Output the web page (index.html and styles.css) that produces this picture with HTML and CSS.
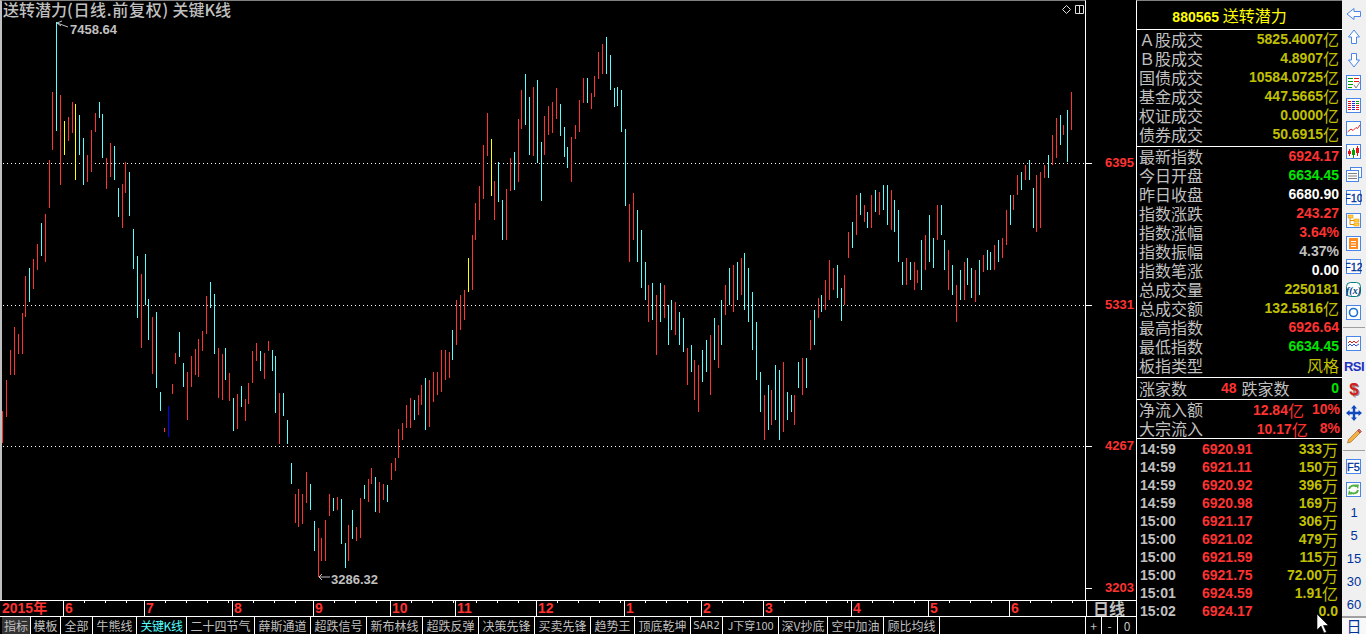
FILE: index.html
```html
<!DOCTYPE html>
<html lang="zh">
<head>
<meta charset="utf-8">
<title>送转潜力</title>
<link rel="stylesheet" href="styles.css">
</head>
<body>
<div class="app">
  <div class="main">
    <div class="chart-row">
      <div class="plot">
        <svg class="bars" viewBox="2 1 1083 599" width="1083" height="599">
          <path class="dots" d="M3 163.5H1085M3 305.5H1085M3 446.5H1085"/>
          <path class="red" d="M2.5 411V443M6.5 380V417M10.5 350V375M14.5 327V375M18.5 334V354M22.5 313V354M25.5 276V317M33.5 259V289M37.5 244V270M45.5 214V262M49.5 160V208M52.5 92V150M60.5 95V185M68.5 117V141M72.5 102V133M87.5 155V182M91.5 130V172M95.5 113V132M106.5 158V189M110.5 143V177M122.5 184V228M125.5 162V193M141.5 274V348M152.5 317V374M164.5 428V432M172.5 384V394M175.5 353V364M187.5 372V420M191.5 356V387M195.5 349V375M198.5 339V377M202.5 331V351M206.5 296V334M218.5 348V398M222.5 354V400M229.5 373V401M237.5 394V429M245.5 399V421M248.5 383V404M252.5 351V383M256.5 343V361M264.5 353V379M268.5 341V351M279.5 393V444M295.5 494V523M298.5 489V527M302.5 494V524M306.5 472V503M318.5 528V577M321.5 538V561M325.5 520V561M329.5 494V516M337.5 497V510M348.5 525V561M356.5 527V541M360.5 498V538M368.5 479V502M371.5 468V484M379.5 482V513M383.5 484V500M391.5 463V480M395.5 458V471M398.5 429V458M402.5 423V440M406.5 405V428M410.5 398V428M418.5 395V415M421.5 385V405M429.5 380V427M433.5 372V402M437.5 372V395M441.5 350V392M445.5 350V380M449.5 352V378M456.5 300V345M460.5 295V330M464.5 290V320M472.5 235V290M475.5 203V240M479.5 186V220M483.5 145V199M487.5 113V156M494.5 181V220M506.5 189V240M510.5 158V191M518.5 119V182M521.5 90V129M533.5 87V156M544.5 116V155M548.5 106V135M552.5 102V133M556.5 88V119M571.5 137V182M575.5 125V139M579.5 100V132M583.5 78V103M591.5 93V109M594.5 76V97M598.5 52V79M602.5 44V74M629.5 204V262M633.5 193V240M648.5 285V322M656.5 295V355M664.5 285V318M675.5 302V335M687.5 348V385M694.5 360V400M698.5 365V412M710.5 335V395M718.5 325V368M725.5 285V315M733.5 265V312M741.5 258V295M764.5 395V440M771.5 390V425M783.5 362V432M794.5 395V425M802.5 358V395M810.5 320V350M818.5 298V318M825.5 280V310M829.5 260V300M833.5 268V290M844.5 275V305M848.5 232V258M856.5 195V235M864.5 205V222M871.5 195V228M879.5 192V215M891.5 190V230M906.5 258V285M914.5 262V290M917.5 270V283M925.5 235V270M937.5 205V240M948.5 250V290M956.5 285V322M964.5 262V300M975.5 270V302M983.5 255V272M994.5 245V270M1002.5 238V258M1006.5 210V245M1013.5 195V210M1017.5 175V195M1025.5 165V180M1036.5 175V232M1040.5 172V228M1044.5 165V178M1052.5 135V165M1056.5 118V158M1063.5 125V135M1071.5 92V130"/>
          <path class="cyan" d="M29.5 268V302M41.5 223V256M56.5 22V131M79.5 115V155M83.5 138V185M99.5 102V118M102.5 114V158M114.5 146V180M118.5 188V217M129.5 172V216M133.5 229V269M137.5 256V318M145.5 254V305M148.5 299V340M156.5 312V388M160.5 392V411M179.5 332V357M183.5 363V387M210.5 282V308M214.5 294V354M225.5 348V380M233.5 398V431M241.5 386V407M260.5 351V371M272.5 350V371M275.5 356V413M283.5 393V416M287.5 420V444M291.5 463V484M310.5 484V510M314.5 521V551M333.5 498V511M341.5 499V544M345.5 543V568M352.5 510V539M364.5 485V499M375.5 477V512M387.5 485V502M414.5 400V420M425.5 378V430M452.5 330V360M498.5 162V202M502.5 200V240M514.5 152V190M525.5 74V125M529.5 97V155M537.5 80V163M541.5 142V201M560.5 104V136M564.5 127V157M567.5 147V168M587.5 78V103M606.5 37V74M610.5 55V90M614.5 88V107M617.5 87V106M621.5 90V132M625.5 129V206M637.5 210V262M641.5 230V288M645.5 262V300M652.5 283V320M660.5 283V322M668.5 305V345M671.5 300V330M679.5 312V345M683.5 318V352M691.5 345V372M702.5 350V382M706.5 340V372M714.5 318V360M721.5 300V345M729.5 268V305M737.5 262V300M744.5 253V310M748.5 268V322M752.5 292V350M756.5 322V380M760.5 372V412M768.5 385V430M775.5 365V420M779.5 370V440M787.5 392V420M791.5 395V412M798.5 362V388M806.5 358V388M814.5 310V345M821.5 295V312M837.5 265V298M841.5 288V321M852.5 222V248M860.5 193V215M867.5 212V228M875.5 190V212M883.5 185V210M887.5 185V225M894.5 200V232M898.5 210V262M902.5 262V285M910.5 262V280M921.5 240V290M929.5 215V262M933.5 238V268M941.5 205V235M944.5 240V270M952.5 265V295M960.5 270V300M967.5 258V285M971.5 268V298M979.5 260V295M987.5 250V270M990.5 252V270M998.5 240V262M1010.5 195V225M1021.5 172V190M1029.5 160V180M1033.5 188V228M1048.5 155V178M1060.5 115V145M1067.5 110V162"/>
          <path class="yellow" d="M64.5 121V155M75.5 104V180M468.5 258V292M491.5 139V196"/>
          <path class="blue" d="M168.5 406V437"/>
          <path class="leader" d="M57 23L62 21M57 23L68 27M57 23L61 26M319 577H330M319 577L322 574M319 577L322 580"/>
        </svg>
        <div class="title">送转潜力<span class="wide">(日线.前复权)</span> 关键K线</div>
        <svg class="corner" viewBox="0 0 24 10" width="24" height="10">
          <path class="corner-line" d="M5.5 .5L9.5 4.5L5.5 8.5L1.5 4.5ZM14.5 .5H22.5V8.5H14.5ZM18.5 .5V8.5"/>
        </svg>
        <span class="extreme extreme-high">7458.64</span>
        <span class="extreme extreme-low">3286.32</span>
      </div>
      <div class="price-axis">
        <div class="price">6395</div>
        <div class="price">5331</div>
        <div class="price">4267</div>
        <div class="price">3203</div>
      </div>
    </div>
    <div class="time-axis">
      <div class="month month-first" style="width:63px">2015年</div>
      <div class="month" style="width:81px">6</div>
      <div class="month" style="width:88px">7</div>
      <div class="month" style="width:81px">8</div>
      <div class="month" style="width:77px">9</div>
      <div class="month" style="width:65px">10</div>
      <div class="month" style="width:81px">11</div>
      <div class="month" style="width:88px">12</div>
      <div class="month" style="width:77px">1</div>
      <div class="month" style="width:62px">2</div>
      <div class="month" style="width:88px">3</div>
      <div class="month" style="width:77px">4</div>
      <div class="month" style="width:81px">5</div>
      <div class="month" style="width:77px">6</div>
      <div class="period">日线</div>
    </div>
    <div class="tabs">
      <div class="tab tab-selected">指标</div>
      <div class="tab tab-w30">模板</div>
      <div class="tab tab-w32">全部</div>
      <div class="tab tab-w44">牛熊线</div>
      <div class="tab tab-w50 tab-active">关键K线</div>
      <div class="tab tab-w68">二十四节气</div>
      <div class="tab tab-w56">薛斯通道</div>
      <div class="tab tab-w56">超跌信号</div>
      <div class="tab tab-w56">新布林线</div>
      <div class="tab tab-w56">超跌反弹</div>
      <div class="tab tab-w56">决策先锋</div>
      <div class="tab tab-w56">买卖先锋</div>
      <div class="tab tab-w44">趋势王</div>
      <div class="tab tab-w56">顶底乾坤</div>
      <div class="tab tab-w32 tab-small">SAR2</div>
      <div class="tab tab-w56 tab-mid">J下穿100</div>
      <div class="tab tab-w49">深V抄底</div>
      <div class="tab tab-w56">空中加油</div>
      <div class="tab tab-w56">顾比均线</div>
      <div class="tab-fill"></div>
      <div class="tab-btn">+</div>
      <div class="tab-btn">-</div>
      <div class="tab-btn tab-btn-last">0</div>
    </div>
  </div>

  <div class="quote">
    <div class="quote-head"><b>880565</b> 送转潜力</div>
    <div class="sec sec-turnover">
      <div class="row"><span>Ａ股成交</span><span class="val olive"><b>5825.4007</b>亿</span></div>
      <div class="row"><span>Ｂ股成交</span><span class="val olive"><b>4.8907</b>亿</span></div>
      <div class="row"><span>国债成交</span><span class="val olive"><b>10584.0725</b>亿</span></div>
      <div class="row"><span>基金成交</span><span class="val olive"><b>447.5665</b>亿</span></div>
      <div class="row"><span>权证成交</span><span class="val olive"><b>0.0000</b>亿</span></div>
      <div class="row"><span>债券成交</span><span class="val olive"><b>50.6915</b>亿</span></div>
    </div>
    <div class="sec sec-index">
      <div class="row"><span>最新指数</span><b class="val red">6924.17</b></div>
      <div class="row"><span>今日开盘</span><b class="val green">6634.45</b></div>
      <div class="row"><span>昨日收盘</span><b class="val white">6680.90</b></div>
      <div class="row"><span>指数涨跌</span><b class="val red">243.27</b></div>
      <div class="row"><span>指数涨幅</span><b class="val red">3.64%</b></div>
      <div class="row"><span>指数振幅</span><b class="val grey">4.37%</b></div>
      <div class="row"><span>指数笔涨</span><b class="val white">0.00</b></div>
      <div class="row"><span>总成交量</span><b class="val olive">2250181</b></div>
      <div class="row"><span>总成交额</span><span class="val olive"><b>132.5816</b>亿</span></div>
      <div class="row"><span>最高指数</span><b class="val red">6926.64</b></div>
      <div class="row"><span>最低指数</span><b class="val green">6634.45</b></div>
      <div class="row"><span>板指类型</span><span class="val olive">风格</span></div>
    </div>
    <div class="sec sec-breadth">
      <span>涨家数</span><b class="breadth-up red">48</b><span class="breadth-down">跌家数</span><b class="val green">0</b>
    </div>
    <div class="sec sec-flow">
      <div class="row"><span>净流入额</span><span class="flow red"><span class="val"><b>12.84</b>亿</span><b class="pct">10%</b></span></div>
      <div class="row"><span>大宗流入</span><span class="flow red"><span class="val"><b>10.17</b>亿</span><b class="pct pct-short">8%</b></span></div>
    </div>
    <div class="trades">
      <div class="trade"><b class="t-time">14:59</b><b class="t-price red">6920.91</b><span class="t-vol olive"><b>333</b>万</span></div>
      <div class="trade"><b class="t-time">14:59</b><b class="t-price red">6921.11</b><span class="t-vol olive"><b>150</b>万</span></div>
      <div class="trade"><b class="t-time">14:59</b><b class="t-price red">6920.92</b><span class="t-vol olive"><b>396</b>万</span></div>
      <div class="trade"><b class="t-time">14:59</b><b class="t-price red">6920.98</b><span class="t-vol olive"><b>169</b>万</span></div>
      <div class="trade"><b class="t-time">15:00</b><b class="t-price red">6921.17</b><span class="t-vol olive"><b>306</b>万</span></div>
      <div class="trade"><b class="t-time">15:00</b><b class="t-price red">6921.02</b><span class="t-vol olive"><b>479</b>万</span></div>
      <div class="trade"><b class="t-time">15:00</b><b class="t-price red">6921.59</b><span class="t-vol olive"><b>115</b>万</span></div>
      <div class="trade"><b class="t-time">15:00</b><b class="t-price red">6921.75</b><span class="t-vol olive"><b>72.00</b>万</span></div>
      <div class="trade"><b class="t-time">15:01</b><b class="t-price red">6924.59</b><span class="t-vol olive"><b>1.91</b>亿</span></div>
      <div class="trade"><b class="t-time">15:02</b><b class="t-price red">6924.17</b><span class="t-vol olive"><b>0.0</b></span></div>
    </div>
  </div>

  <div class="tools">
    <div class="tool"><svg viewBox="0 0 16 16" width="16" height="16"><path class="ico" d="M1 8L8 2.5V5.5H14.5V10.5H8V13.5Z"/></svg></div>
    <div class="tool"><svg viewBox="0 0 16 16" width="16" height="16"><path class="ico" d="M8 1L13.5 8H10.5V14.5H5.5V8H2.5Z"/></svg></div>
    <div class="tool"><svg viewBox="0 0 16 16" width="16" height="16"><path class="ico" d="M8 15L13.5 8H10.5V1.5H5.5V8H2.5Z"/></svg></div>
    <div class="tool"><svg viewBox="0 0 16 16" width="16" height="16"><rect class="ico" x=".5" y=".5" width="14" height="14"/><path class="s-green" d="M2 3.5H7M2 6.5H7M2 9.5H7M2 12.5H6"/><path class="s-red" d="M8 3.5H13M8 6.5H13"/><path class="s-grey" d="M8 10L10 13L14 7"/></svg></div>
    <div class="tool"><svg viewBox="0 0 16 16" width="16" height="16"><rect class="ico" x=".5" y=".5" width="14" height="14"/><path class="s-red" d="M2 3.5H5M2 5.5H5M2 7.5H5M2 9.5H5M2 11.5H5"/><path class="s-blue" d="M6 3.5H9M6 5.5H9M6 7.5H9M6 9.5H9M6 11.5H9"/><path class="s-green" d="M10 3.5H13M10 5.5H13"/><path class="s-red" d="M10 7.5H13M10 9.5H13M10 11.5H13"/></svg></div>
    <div class="tool"><svg viewBox="0 0 16 16" width="16" height="16"><rect class="ico" x=".5" y=".5" width="14" height="14"/><path class="s-red-thin" d="M1.5 11L5 8L7 9.5L10 6.5L11.5 7.5L14 4"/></svg></div>
    <div class="tool"><svg viewBox="0 0 16 16" width="16" height="16"><rect class="ico" x=".5" y=".5" width="14" height="14"/><path class="s-red" d="M3.5 5V12M11.5 2V12"/><path class="s-green" d="M7.5 4V14"/><rect class="f-red" x="2" y="7" width="3" height="3"/><rect class="f-green" x="6" y="6" width="3" height="5"/><rect class="f-red" x="10" y="4" width="3" height="5"/></svg></div>
    <div class="tool"><svg viewBox="0 0 16 16" width="16" height="16"><rect class="ico" x="4.5" y=".5" width="11" height="10"/><rect class="ico" x=".5" y="3.5" width="12" height="11"/><path class="s-grey" d="M2 6.5H11M2 9H11M2 11.5H11"/></svg></div>
    <div class="tool"><svg viewBox="0 0 16 16" width="16" height="16"><rect class="ico" x=".5" y=".5" width="14" height="14"/><text class="ico-text" x="7.5" y="12">F10</text></svg></div>
    <div class="tool"><svg viewBox="0 0 16 16" width="16" height="16"><rect class="ico" x=".5" y=".5" width="14" height="14"/><rect class="f-yellow" x="2" y="2" width="5" height="3"/><rect class="f-yellow" x="8" y="6" width="5" height="3"/><rect class="f-yellow" x="8" y="10" width="5" height="3"/><path class="s-orange" d="M4 5V11.5H8M4 7.5H8"/></svg></div>
    <div class="tool"><svg viewBox="0 0 16 16" width="16" height="16"><rect class="ico" x=".5" y=".5" width="14" height="14"/><rect class="f-orange" x="3" y="2" width="9" height="11"/><path class="s-white" d="M5 5.5H10M5 8H10M5 10.5H10"/></svg></div>
    <div class="tool"><svg viewBox="0 0 16 16" width="16" height="16"><rect class="ico" x=".5" y=".5" width="14" height="14"/><text class="ico-text" x="7.5" y="12">F12</text></svg></div>
    <div class="tool"><svg viewBox="0 0 16 16" width="16" height="16"><rect class="ico-teal" x=".5" y=".5" width="14" height="14" rx="4"/><text class="ico-fx" x="7.5" y="11.5">f(x)</text></svg></div>
    <div class="tool"><svg viewBox="0 0 16 16" width="16" height="16"><rect class="ico" x=".5" y=".5" width="14" height="14"/><circle class="ico-ring" cx="7.5" cy="7.5" r="4"/></svg></div>
    <div class="tool-sep"></div>
    <div class="tool"><svg viewBox="0 0 16 16" width="16" height="16"><rect class="ico" x=".5" y=".5" width="14" height="14"/><path class="s-red-thin" d="M2 7L4 5L6 7L8 5L10 7L13 4.5"/><path class="s-blue-thin" d="M2 10L4 8L6 10L8 8L10 10L13 8"/></svg></div>
    <div class="tool"><span class="rsi">RSI</span></div>
    <div class="tool"><span class="dollar">$</span></div>
    <div class="tool"><svg viewBox="0 0 16 16" width="16" height="16"><path class="f-move" d="M8 0L11 3.5H9.2V6.8H12.5V5L16 8L12.5 11V9.2H9.2V12.5H11L8 16L5 12.5H6.8V9.2H3.5V11L0 8L3.5 5V6.8H6.8V3.5H5Z"/></svg></div>
    <div class="tool"><svg viewBox="0 0 16 16" width="16" height="16"><path class="pencil-body" d="M5 14L1.5 15L2.5 11.5L11.5 2.5L14 5Z"/><path class="pencil-tip" d="M11.5 2.5L13 1L15.5 3.5L14 5Z"/></svg></div>
    <div class="tool-sep"></div>
    <div class="tool"><svg viewBox="0 0 16 16" width="16" height="16"><rect class="ico" x=".5" y=".5" width="14" height="14"/><text class="ico-text" x="7.5" y="12">F5</text></svg></div>
    <div class="tool"><svg viewBox="0 0 16 16" width="16" height="16"><rect class="ico" x=".5" y=".5" width="14" height="14"/><path class="s-refresh" d="M3 7C3.5 4 7.5 2.5 10.5 4.5M12 8C11.5 11 7.5 12.5 4.5 10.5"/><path class="f-refresh" d="M9 2.5L13 2.5L12 7ZM6 12.5L2 12.5L3 8Z"/></svg></div>
    <div class="tool tool-num">1</div>
    <div class="tool tool-num">5</div>
    <div class="tool tool-num">15</div>
    <div class="tool tool-num">30</div>
    <div class="tool tool-num">60</div>
    <div class="tool-day">日</div>
  </div>

  <svg class="cursor" viewBox="0 0 14 21" width="14" height="21"><path class="cursor-arrow" d="M1 1V17L5 13L8 20L10.5 19L7.5 12.5H12.5Z"/></svg>
</div>
</body>
</html>
```

FILE: styles.css
```css
* { box-sizing: border-box; }
html, body { margin: 0; height: 100%; background: #000; overflow: hidden; }
body { font-family: "Noto Sans CJK SC", "Liberation Sans", sans-serif; font-size: 16px; color: #c0c0c0; }
b { font-family: "Liberation Sans", "Noto Sans CJK SC", sans-serif; font-size: 14px; font-weight: 700; }

.app { position: relative; display: flex; width: 1366px; height: 634px; background: #000; overflow: hidden; }
.main { display: flex; flex-direction: column; width: 1136px; }

.chart-row { display: flex; height: 600px; }
.plot { position: relative; width: 1086px; border-left: 2px solid #c0c0c0; border-top: 1px solid #808080; border-right: 1px solid #fff; }
.bars { position: absolute; left: 0; top: 0; display: block; }
.bars path { fill: none; stroke-width: 1; shape-rendering: crispEdges; }
.bars .dots { stroke: #fff; stroke-dasharray: 1 3; }
.bars .red { stroke: #ff3232; }
.bars .cyan { stroke: #54ffff; }
.bars .yellow { stroke: #ffff00; }
.bars .blue { stroke: #0000ff; }
.bars .leader { stroke: #c0c0c0; shape-rendering: auto; }

.title { position: absolute; left: 1px; top: 0; font-size: 16px; line-height: 17px; font-weight: 500; color: #c0c0c0; white-space: nowrap; }
.wide { letter-spacing: .7px; }
.corner { position: absolute; left: 1059px; top: 4px; }
.corner-line { fill: none; stroke: #e0e0e0; stroke-width: 1; }
.extreme { position: absolute; font: 700 13px/15px "Liberation Sans", sans-serif; color: #c0c0c0; }
.extreme-high { left: 68px; top: 21px; }
.extreme-low { left: 329px; top: 571px; }

.price-axis { width: 50px; padding-top: 155px; }
.price { position: relative; height: 141.7px; padding-right: 2px; text-align: right; font: 700 13px/16px "Liberation Sans", sans-serif; color: #ff3232; }
.price:last-child { height: 16px; }
.price::before { content: ""; position: absolute; left: 0; top: 8px; width: 6px; height: 1px; background: #fff; }

.time-axis { display: flex; height: 16px; border-top: 1px solid #fff; }
.month { padding-left: 1px; border-left: 1px solid #fff; color: #ff3232; font: 700 14px/15px "Liberation Sans", sans-serif; background: linear-gradient(to right, #fff 1px, transparent 1px) 20px 0 / 21px 2px repeat-x; }
.month-first { border-left: 0; padding-left: 2px; background: none; font-family: "Liberation Sans", "Noto Sans CJK SC", sans-serif; }
.period { width: 50px; padding-right: 5px; border-left: 1px solid #fff; color: #c0c0c0; font: 700 16px/15px "Noto Sans CJK SC", sans-serif; text-align: center; }

.tabs { display: flex; height: 18px; border-top: 1px solid #fff; font-size: 12px; line-height: 17px; color: #c0c0c0; white-space: nowrap; }
.tab { border-right: 1px solid #fff; text-align: center; }
.tab:first-child { margin-left: 2px; width: 29px; }
.tab-w30 { width: 30px; }
.tab-w32 { width: 32px; }
.tab-w44 { width: 44px; }
.tab-w49 { width: 49px; }
.tab-w50 { width: 50px; }
.tab-w56 { width: 56px; }
.tab-w68 { width: 68px; }
.tab-selected { background: #333; }
.tab-active { color: #54ffff; letter-spacing: -.4px; }
.tab-small { font-family: "DejaVu Sans", sans-serif; font-size: 10px; }
.tab-mid { font-size: 11px; }
.tab-fill { flex: 1; }
.tab-btn { width: 16px; border-left: 1px solid #fff; text-align: center; }
.tab-btn-last { width: 19px; }

.quote { display: flex; flex-direction: column; width: 206px; border-left: 1px solid #fff; border-top: 1px solid #808080; }
.quote-head { height: 29px; padding-right: 20px; border-bottom: 1px solid #fff; color: #ff0; text-align: center; line-height: 28px; }
.sec { padding: 0 3px 0 2px; border-bottom: 1px solid #fff; }
.sec-turnover { height: 117px; }
.sec-index { height: 231px; }
.sec-breadth { display: flex; align-items: center; height: 22px; padding-bottom: 2px; }
.sec-flow { height: 39px; }
.row { display: flex; justify-content: space-between; height: 19px; line-height: 19px; white-space: nowrap; }
.sec-flow .row { line-height: 18px; }
.val { display: inline-flex; align-items: center; margin-left: auto; }
.breadth-up { margin-left: 34px; }
.breadth-down { margin-left: 5px; }
.flow { display: flex; gap: 8px; }
.pct { margin-right: -1px; }
.pct-short { margin-left: 4px; }

.red { color: #ff3232; }
.green { color: #00e600; }
.white { color: #fff; }
.grey { color: #c0c0c0; }
.olive { color: #c0c000; }

.trades { padding: 1px 4px 0 3px; }
.trade { display: flex; height: 18px; line-height: 18px; }
.t-time { width: 62px; color: #c0c0c0; }
.t-vol { display: inline-flex; align-items: center; margin-left: auto; }

.tools { display: flex; flex-direction: column; width: 24px; padding-top: 2px; background: #f0f0f0; }
.tool { display: flex; align-items: center; justify-content: center; height: 23px; }
.tool svg { display: block; }
.tool-sep { height: 8px; margin: 0 1px; background: linear-gradient(#a0a0a0, #a0a0a0) 0 3px / 100% 1px no-repeat; }
.tool-num { color: #003399; font: 400 13px/23px "Liberation Sans", sans-serif; }
.tool-day { height: 18px; overflow: hidden; border-top: 2px solid #a0a0a0; color: #003399; font-size: 15px; line-height: 16px; text-align: center; background: #f8f8f8; }

.ico { fill: #fff; stroke: #4a86e8; stroke-width: 1; }
.ico-teal { fill: #fff; stroke: #008080; stroke-width: 1; }
.ico-ring { fill: none; stroke: #1f6fd0; stroke-width: 1.6; }
.ico-text { font: 400 11px "Liberation Sans", sans-serif; fill: #003399; text-anchor: middle; stroke: #003399; stroke-width: .3; }
.ico-fx { font: italic 700 10px "Liberation Serif", serif; fill: #004080; text-anchor: middle; }
.s-green { stroke: #00a000; fill: none; stroke-width: 1; }
.s-red { stroke: #ee1111; fill: none; stroke-width: 1; }
.s-blue { stroke: #1030e0; fill: none; stroke-width: 1; }
.s-grey { stroke: #808080; fill: none; stroke-width: 1; }
.s-red-thin { stroke: #e02020; fill: none; stroke-width: 1; }
.s-blue-thin { stroke: #3050e0; fill: none; stroke-width: 1; }
.s-orange { stroke: #e08a00; fill: none; stroke-width: 1; }
.s-white { stroke: #fff; fill: none; stroke-width: 1; }
.s-refresh { stroke: #50b040; fill: none; stroke-width: 2; }
.f-red { fill: #ee1111; }
.f-green { fill: #00a000; }
.f-yellow { fill: #ffd040; stroke: #e08a00; stroke-width: .5; }
.f-orange { fill: #ff8a20; }
.f-refresh { fill: #50b040; }
.f-move { fill: #1048c0; }
.pencil-body { fill: #f4b040; stroke: #906020; stroke-width: .6; }
.pencil-tip { fill: #e06060; stroke: #804040; stroke-width: .6; }
.rsi { color: #2030c0; font: 700 13px/23px "Liberation Sans", sans-serif; letter-spacing: -.5px; }
.dollar { color: #d02020; font: 900 17px/23px "Liberation Sans", sans-serif; text-shadow: 1px 1px 0 #909090; }

.cursor { position: absolute; left: 1316px; top: 613px; }
.cursor-arrow { fill: #fff; stroke: #000; stroke-width: .6; }
```
